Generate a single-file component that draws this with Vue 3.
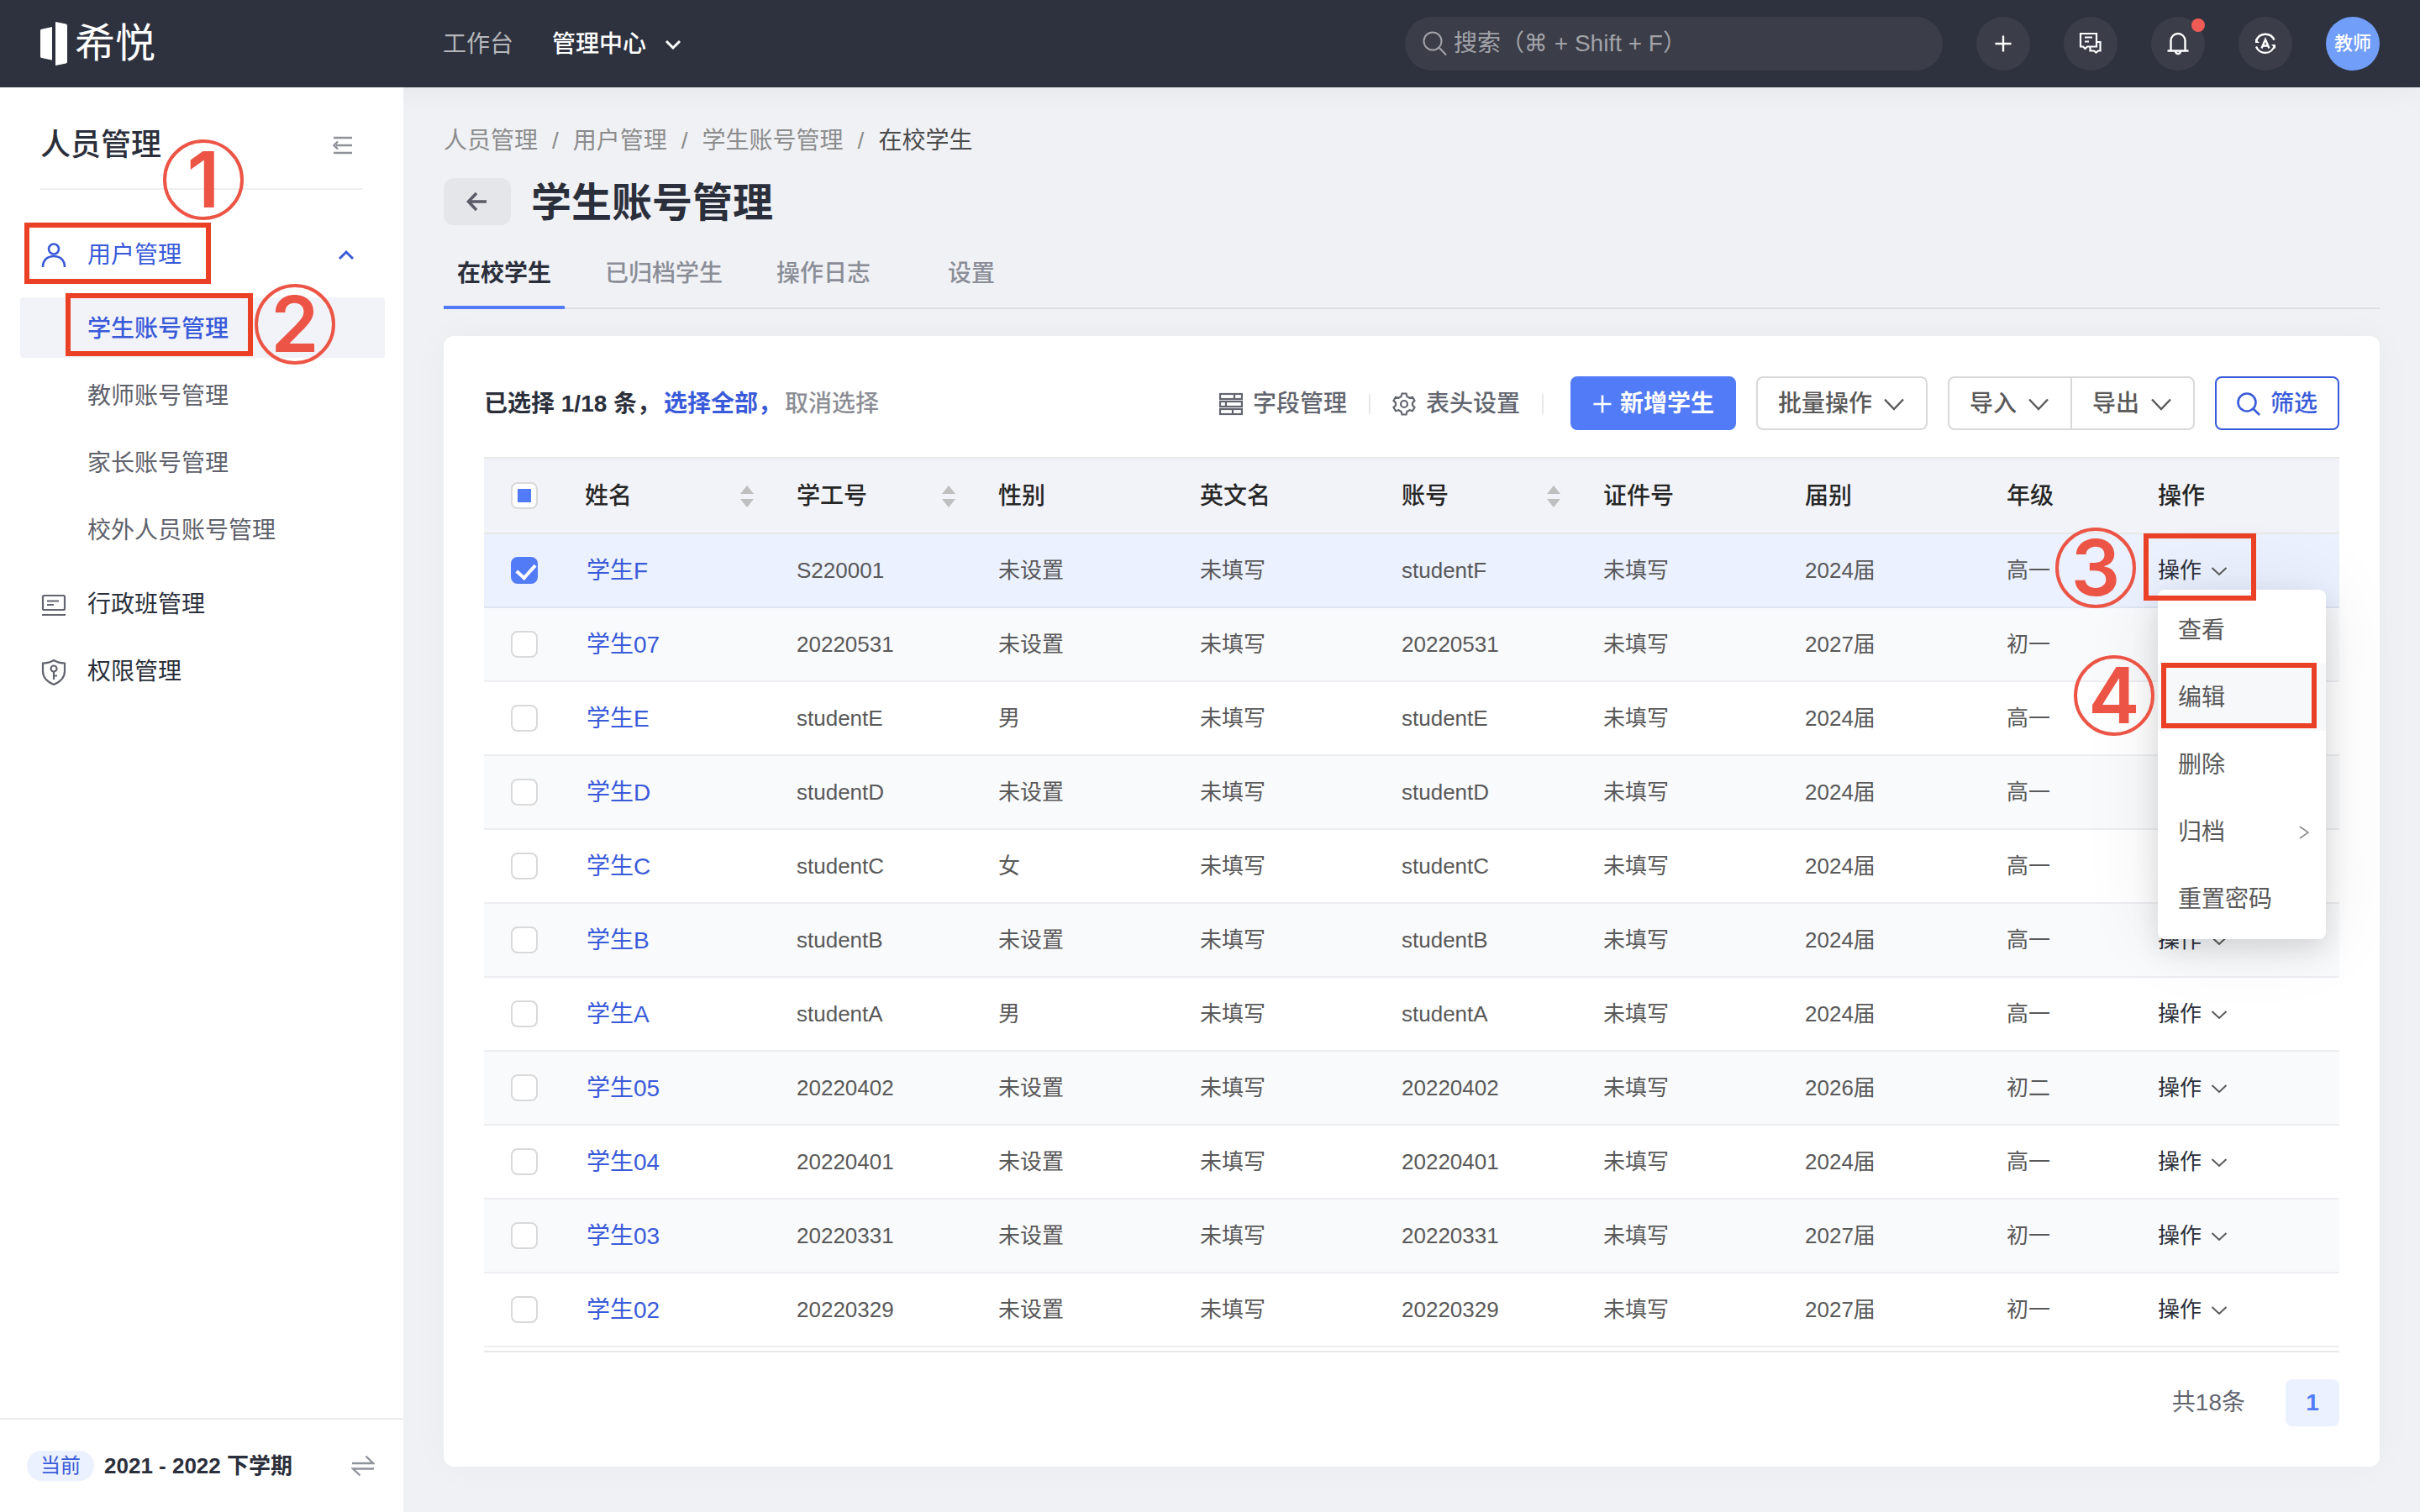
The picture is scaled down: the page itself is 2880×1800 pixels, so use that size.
<script setup>
import { ref } from 'vue'

const crumbs = ['人员管理', '用户管理', '学生账号管理']
const tabs = ['在校学生', '已归档学生', '操作日志', '设置']
const activeTab = ref('在校学生')
const subMenu = ['学生账号管理', '教师账号管理', '家长账号管理', '校外人员账号管理']

const columns = [
  { title: '姓名', width: 252, sortable: true },
  { title: '学工号', width: 240, sortable: true },
  { title: '性别', width: 240 },
  { title: '英文名', width: 240 },
  { title: '账号', width: 240, sortable: true },
  { title: '证件号', width: 240 },
  { title: '届别', width: 240 },
  { title: '年级', width: 180 },
  { title: '操作', width: 240 },
]

const student = (name, code, gender, cohort, grade, checked = false, account = code) => ({
  name, code, gender, cohort, grade, checked, account,
})

const rows = ref([
  student('学生F', 'S220001', '未设置', '2024届', '高一', true, 'studentF'),
  student('学生07', '20220531', '未设置', '2027届', '初一'),
  student('学生E', 'studentE', '男', '2024届', '高一'),
  student('学生D', 'studentD', '未设置', '2024届', '高一'),
  student('学生C', 'studentC', '女', '2024届', '高一'),
  student('学生B', 'studentB', '未设置', '2024届', '高一'),
  student('学生A', 'studentA', '男', '2024届', '高一'),
  student('学生05', '20220402', '未设置', '2026届', '初二'),
  student('学生04', '20220401', '未设置', '2024届', '高一'),
  student('学生03', '20220331', '未设置', '2027届', '初一'),
  student('学生02', '20220329', '未设置', '2027届', '初一'),
])

const rowMenu = ['查看', '编辑', '删除', '归档', '重置密码']
</script>

<template>
  <div class="page">
    <header class="topbar">
      <a class="logo" href="#" aria-label="希悦">
        <svg width="32" height="52" viewBox="0 0 32 52" fill="#fff">
          <path d="M0 10.500Q0 9 1.500 8.700L14 6V45.500L1.500 43Q0 42.700 0 41.500Z" />
          <path d="M18 0L30.500 2.500Q32 2.800 32 4.500V47.500Q32 49.200 30.500 49.500L18 52Z" />
        </svg>
        <span>希悦</span>
      </a>
      <nav class="topnav">
        <a href="#">工作台</a>
        <a href="#" class="current">管理中心
          <svg width="24" height="24" viewBox="0 0 24 24" class="line" stroke-width="3"><path d="M4 8l8 8 8-8" /></svg>
        </a>
      </nav>
      <div class="topright">
        <label class="search">
          <svg width="32" height="32" viewBox="0 0 32 32" class="line" stroke-width="2"><circle cx="13" cy="13" r="10.500" /><path d="M20.500 20.500L29 29.500" /></svg>
          <input type="text" aria-label="搜索" placeholder="搜索（⌘ + Shift + F）" />
        </label>
        <button class="round" aria-label="新建">
          <svg width="32" height="32" viewBox="0 0 32 32" class="line" stroke-width="2.400"><path d="M16 6.500v19M6.500 16h19" /></svg>
        </button>
        <button class="round" aria-label="会话">
          <svg width="32" height="32" viewBox="0 0 32 32" class="line" stroke-width="2.200"><path d="M4 4h19v15.500H12l-2.500 2.500L7 19.500H4z" /><path d="M9 8.500h9M9 13.500h5" /><path d="M23 14h4.500v10.500H25l-2.500 2-2.500-2h-4.500V20" /></svg>
        </button>
        <button class="round" aria-label="通知">
          <svg width="32" height="32" viewBox="0 0 32 32" class="line" stroke-width="2.400"><path d="M7.500 24V12.500a8.500 8.500 0 0 1 17 0V24M3.500 24.500h25M13 25a3 3 0 0 0 6 0" /></svg>
          <i class="dot"></i>
        </button>
        <button class="round" aria-label="语言">
          <svg width="32" height="32" viewBox="0 0 32 32" class="line" stroke-width="2.400"><path d="M5 13A11.500 11.500 0 0 1 26.500 11.500M5 19.500A11.500 11.500 0 0 0 26.800 18.500" /><path d="M4 10v5h5zM28 22v-5h-5z" fill="currentColor" stroke="none" /><path d="M11.500 21.500L16 11l4.500 10.500M13 18.500h6" /></svg>
        </button>
        <button class="round avatar">教师</button>
      </div>
    </header>

    <div class="body">
      <aside class="sidebar">
        <div class="side-head">
          <h2>人员管理</h2>
          <svg width="24" height="24" viewBox="0 0 24 24" class="line" stroke-width="2.400"><path d="M1 3h22M4 12h19M1 21h22M6 7.500L1.500 12 6 16.500" /></svg>
          <span class="step step-1">1</span>
        </div>
        <nav class="menu">
          <a href="#" class="item open">
            <svg width="32" height="32" viewBox="0 0 32 32" class="line" stroke-width="2.600"><circle cx="16" cy="8.500" r="6" /><path d="M3 30c0-8.500 5.500-13 13-13s13 4.500 13 13" /></svg>
            用户管理
            <svg class="caret line" width="24" height="24" viewBox="0 0 24 24" stroke-width="3"><path d="M4 16l8-8 8 8" /></svg>
            <span class="frame frame-1"></span>
          </a>
          <div class="submenu">
            <a v-for="(s, i) in subMenu" :key="s" href="#" class="item sub" :class="{ active: i === 0 }">
              {{ s }}
              <template v-if="i === 0">
                <span class="frame frame-2"></span>
                <span class="step step-2">2</span>
              </template>
            </a>
          </div>
          <a href="#" class="item">
            <svg width="32" height="32" viewBox="0 0 32 32" class="line" stroke-width="2.200"><rect x="3" y="5" width="26" height="17" rx="1.500" /><path d="M2 28h28M8 11.500h14M8 16h8" /></svg>
            行政班管理
          </a>
          <a href="#" class="item">
            <svg width="32" height="32" viewBox="0 0 32 32" class="line" stroke-width="2.200"><path d="M16 2c4 2.500 8 3.500 13 3.500V15c0 7.500-5 12.500-13 16C8 27.500 3 22.500 3 15V5.500C8 5.500 12 4.500 16 2z" /><circle cx="16" cy="12" r="3.500" /><path d="M16 15.500V25M16 20.500h4" /></svg>
            权限管理
          </a>
        </nav>
        <div class="term">
          <span class="pill">当前</span>
          <strong>2021 - 2022 下学期</strong>
          <svg width="28" height="28" viewBox="0 0 28 28" class="line" stroke-width="2.400"><path d="M1 11h25L17.500 2.500M27 17.500H2l8.500 8" /></svg>
        </div>
      </aside>

      <main class="main">
        <nav class="crumbs">
          <template v-for="c in crumbs" :key="c"><a href="#">{{ c }}</a><i>/</i></template>
          <span>在校学生</span>
        </nav>
        <div class="title">
          <button class="back" aria-label="返回">
            <svg width="28" height="28" viewBox="0 0 28 28" class="line" stroke-width="3.600"><path d="M25 14H4M13 4L3.500 14 13 24" /></svg>
          </button>
          <h1>学生账号管理</h1>
        </div>
        <div class="tabs" role="tablist">
          <button v-for="t in tabs" :key="t" role="tab" :class="{ on: t === activeTab }" @click="activeTab = t">{{ t }}</button>
        </div>

        <section class="card">
          <div class="toolbar">
            <p class="picked"><span>已选择 1/18 条，</span><a href="#">选择全部，</a><a href="#" class="muted">取消选择</a></p>
            <button class="plain">
              <svg width="28" height="28" viewBox="0 0 28 28" class="line" stroke-width="2.200"><rect x="1" y="2" width="26" height="6" /><rect x="1" y="11" width="26" height="6" /><rect x="1" y="20" width="26" height="6" /><path d="M18 2v6M8 11v6M16 20v6" /></svg>
              字段管理
            </button>
            <button class="plain">
              <svg width="28" height="28" viewBox="0 0 28 28" class="line" stroke-width="2.200"><circle cx="14" cy="14" r="4" /><path d="M11.500 1.500h5l1 3.500 3 1.700 3.500-1 2.500 4.300-2.500 2.500v3l2.500 2.500-2.500 4.300-3.500-1-3 1.700-1 3.500h-5l-1-3.500-3-1.700-3.500 1L1.500 18 4 15.500v-3L1.500 10 4 5.700l3.500 1 3-1.700z" /></svg>
              表头设置
            </button>
            <div class="buttons">
              <button class="btn primary">
                <svg width="24" height="24" viewBox="0 0 24 24" class="line" stroke-width="2.600"><path d="M12 1.500v21M1.500 12h21" /></svg>
                新增学生
              </button>
              <button class="btn">批量操作
                <svg width="28" height="28" viewBox="0 0 28 28" class="line" stroke-width="2.400"><path d="M3 8.500L14 20 25 8.500" /></svg>
              </button>
              <div class="group">
                <button class="btn">导入
                  <svg width="28" height="28" viewBox="0 0 28 28" class="line" stroke-width="2.400"><path d="M3 8.500L14 20 25 8.500" /></svg>
                </button>
                <button class="btn">导出
                  <svg width="28" height="28" viewBox="0 0 28 28" class="line" stroke-width="2.400"><path d="M3 8.500L14 20 25 8.500" /></svg>
                </button>
              </div>
              <button class="btn filter">
                <svg width="28" height="28" viewBox="0 0 28 28" class="line" stroke-width="2.600"><circle cx="12" cy="12" r="10.500" /><path d="M19.500 19.500L27 27" /></svg>
                筛选
              </button>
            </div>
          </div>

          <table class="grid">
            <colgroup>
              <col style="width: 96px" />
              <col v-for="c in columns" :key="c.title" :style="{ width: c.width + 'px' }" />
            </colgroup>
            <thead>
              <tr>
                <th class="tick"><input type="checkbox" aria-label="全选" :indeterminate.prop="true" /></th>
                <th v-for="c in columns" :key="c.title">
                  <div class="th">
                    {{ c.title }}
                    <svg v-if="c.sortable" width="16" height="26" viewBox="0 0 16 26" fill="#bfbfbf"><path d="M8 0l8 10H0zM8 26l8-10H0z" /></svg>
                  </div>
                </th>
              </tr>
            </thead>
            <tbody>
              <tr v-for="(r, i) in rows" :key="r.name" :class="{ chosen: r.checked }">
                <td class="tick"><input v-model="r.checked" type="checkbox" :aria-label="r.name" /></td>
                <td class="name"><a href="#">{{ r.name }}</a></td>
                <td>{{ r.code }}</td>
                <td>{{ r.gender }}</td>
                <td>未填写</td>
                <td>{{ r.account }}</td>
                <td>未填写</td>
                <td>{{ r.cohort }}</td>
                <td>{{ r.grade }}</td>
                <td>
                  <div class="action">
                    <button>操作
                      <svg width="20" height="20" viewBox="0 0 20 20" class="line" stroke-width="2"><path d="M1.500 7l8.500 8 8.500-8" /></svg>
                    </button>
                    <template v-if="i === 0">
                      <div class="dropdown">
                        <a v-for="m in rowMenu" :key="m" href="#" :class="{ hover: m === '编辑' }">
                          {{ m }}
                          <svg v-if="m === '归档'" class="more line" width="12" height="18" viewBox="0 0 12 18" stroke-width="1.600"><path d="M1 2l10 7-10 7" /></svg>
                          <template v-if="m === '编辑'">
                            <span class="frame frame-4"></span>
                            <span class="step step-4">4</span>
                          </template>
                        </a>
                      </div>
                      <span class="frame frame-3"></span>
                      <span class="step step-3">3</span>
                    </template>
                  </div>
                </td>
              </tr>
            </tbody>
          </table>

          <footer class="pager">
            <span>共18条</span>
            <button>1</button>
          </footer>
        </section>
      </main>
    </div>
  </div>
</template>

<style>
body {
  background: #f0f1f5;
}
</style>

<style scoped>
* {
  box-sizing: border-box;
}
.page {
  min-height: 100vh;
  display: flex;
  flex-direction: column;
  background: #f0f1f5;
  color: #2b2f3b;
  font-family: "Liberation Sans", "Noto Sans CJK SC", sans-serif;
  font-size: 28px;
  line-height: 40px;
}
a {
  color: inherit;
  text-decoration: none;
}
button {
  margin: 0;
  padding: 0;
  border: 0;
  background: none;
  color: inherit;
  font: inherit;
  cursor: pointer;
}
h1, h2, p {
  margin: 0;
}
i {
  font-style: normal;
}
svg {
  flex: none;
  display: block;
}
.line {
  fill: none;
  stroke: currentColor;
}

/* Top bar */
.topbar {
  position: relative;
  z-index: 1;
  display: flex;
  align-items: center;
  height: 104px;
  padding-right: 48px;
  background: #2e323e;
  color: #fff;
  box-shadow: 0 0 40px rgba(0, 0, 0, 0.06);
}
.logo {
  display: flex;
  align-items: center;
  gap: 9px;
  width: 527px;
  padding-left: 48px;
  font-size: 48px;
  font-weight: 400;
  line-height: 52px;
}
.topnav {
  display: flex;
  gap: 46px;
  padding-top: 2px;
}
.topnav a {
  display: flex;
  align-items: center;
  gap: 20px;
  color: #b6b7bb;
}
.topnav .current {
  color: #fff;
  font-weight: 500;
}
.topright {
  display: flex;
  gap: 40px;
  margin-left: auto;
}
.search {
  display: flex;
  align-items: center;
  gap: 6px;
  width: 640px;
  height: 64px;
  padding: 0 20px;
  border-radius: 32px;
  background: #3b3d49;
  color: #a2a3a8;
}
.search input {
  flex: 1;
  min-width: 0;
  padding: 0;
  border: 0;
  outline: 0;
  background: none;
  color: #fff;
  font: inherit;
  font-family: "Liberation Sans", "DejaVu Sans", "Noto Sans CJK SC", sans-serif;
}
.search input::placeholder {
  color: #a2a3a8;
  opacity: 1;
}
.round {
  position: relative;
  display: flex;
  align-items: center;
  justify-content: center;
  width: 64px;
  height: 64px;
  border-radius: 50%;
  background: #3b3d49;
}
.avatar {
  background: #719ef9;
  font-size: 22px;
  font-weight: 500;
}
.dot {
  position: absolute;
  top: 2px;
  right: 0;
  width: 16px;
  height: 16px;
  border-radius: 50%;
  background: #f05b56;
}

/* Sidebar */
.body {
  display: flex;
  flex: 1;
}
.sidebar {
  position: relative;
  z-index: 2;
  display: flex;
  flex-direction: column;
  width: 480px;
  flex: none;
  background: #fff;
}
.side-head {
  position: relative;
  display: flex;
  align-items: center;
  justify-content: space-between;
  height: 122px;
  margin: 0 48px;
  padding: 18px 12px 0 0;
  border-bottom: 2px solid #f0f0f0;
  color: #8f9199;
}
.side-head h2 {
  color: #2b2f3b;
  font-size: 36px;
  font-weight: 500;
}
.menu {
  display: flex;
  flex-direction: column;
  gap: 8px;
  flex: 1;
  padding: 40px 22px 0 24px;
}
.item {
  position: relative;
  display: flex;
  align-items: center;
  gap: 24px;
  height: 72px;
  padding: 3px 34px 0 24px;
  border-radius: 4px;
}
.item > svg {
  color: #62656f;
}
.item.open,
.item.open > svg {
  color: #3a5bd9;
}
.item .caret {
  margin-left: auto;
}
.submenu {
  display: flex;
  flex-direction: column;
  gap: 8px;
  padding: 8px 0;
}
.item.sub {
  padding-left: 80px;
  color: #5f626c;
}
.item.active {
  background: #f2f3f8;
  color: #3a5bd9;
  font-weight: 500;
}
.term {
  display: flex;
  align-items: center;
  gap: 12px;
  height: 112px;
  padding: 0 34px 0 32px;
  border-top: 2px solid #ebebeb;
  font-size: 26px;
}
.term strong {
  font-weight: 600;
}
.term svg {
  margin-left: auto;
  color: #8f939c;
}
.pill {
  width: 80px;
  border-radius: 18px;
  background: #ebf1fe;
  color: #3a5bd9;
  font-size: 24px;
  line-height: 36px;
  text-align: center;
}

/* Main column */
.main {
  flex: 1;
  min-width: 0;
  padding: 44px 48px 54px;
}
.crumbs {
  display: flex;
  gap: 17px;
  color: #8c8c8c;
}
.crumbs span {
  color: #4a4a4a;
}
.title {
  display: flex;
  align-items: center;
  gap: 24px;
  height: 56px;
  margin-top: 24px;
}
.title h1 {
  padding-top: 4px;
  font-size: 48px;
  font-weight: 700;
  line-height: 56px;
}
.back {
  display: flex;
  align-items: center;
  justify-content: center;
  width: 80px;
  height: 56px;
  border-radius: 12px;
  background: #e5e6ea;
  color: #5a5d68;
}
.tabs {
  display: flex;
  gap: 32px;
  height: 100px;
  margin-bottom: 32px;
  box-shadow: inset 0 -2px #dddfe4;
}
.tabs button {
  min-width: 144px;
  padding: 20px 16px 0;
  border-bottom: 4px solid transparent;
  color: #8a8d96;
  font-weight: 500;
}
.tabs .on {
  border-color: #527bf7;
  color: #2b2f3b;
  font-weight: 700;
}
.card {
  padding: 48px;
  border-radius: 12px;
  background: #fff;
  box-shadow: 0 0 48px rgba(0, 0, 0, 0.03);
}

/* Toolbar */
.toolbar {
  display: flex;
  align-items: center;
  margin-bottom: 32px;
  font-weight: 500;
}
.picked {
  display: flex;
  gap: 4px;
  margin-right: auto;
  padding-top: 2px;
  font-weight: 600;
}
.picked a {
  color: #3a5bd9;
}
.picked .muted {
  color: #8c8e95;
  font-weight: 500;
}
.plain {
  display: flex;
  align-items: center;
  gap: 12px;
  padding-top: 2px;
  padding-right: 26px;
  color: #62656f;
}
.plain::after {
  content: "";
  width: 2px;
  height: 24px;
  margin-left: 14px;
  background: #e8e8e8;
}
.plain + .plain {
  padding-right: 32px;
}
.buttons {
  display: flex;
  gap: 24px;
}
.btn {
  display: flex;
  align-items: center;
  gap: 12px;
  height: 64px;
  padding: 2px 24px 0;
  border: 2px solid #d9d9d9;
  border-radius: 8px;
  background: #fff;
  color: #595959;
}
.primary {
  gap: 9px;
  border-color: #527bf7;
  background: #527bf7;
  color: #fff;
  font-weight: 600;
}
.filter {
  border-color: #3a5bd9;
  color: #3a5bd9;
}
.group {
  display: flex;
}
.group .btn:first-child {
  border-radius: 8px 0 0 8px;
}
.group .btn:last-child {
  margin-left: -2px;
  border-radius: 0 8px 8px 0;
}

/* Table */
.grid {
  width: 100%;
  table-layout: fixed;
  border-collapse: separate;
  border-spacing: 0;
  border-bottom: 2px solid #e8e8e8;
  padding-bottom: 4px;
  color: #595959;
  font-size: 26px;
}
.grid th {
  height: 92px;
  padding: 2px 27px 0 24px;
  border-top: 2px solid #e8e8e8;
  border-bottom: 2px solid #e8e8e8;
  background: #f2f3f8;
  color: #262626;
  font-size: 28px;
  font-weight: 500;
}
.th {
  display: flex;
  align-items: center;
  justify-content: space-between;
}
.grid td {
  height: 88px;
  padding: 0 0 0 24px;
  border-bottom: 2px solid #edeef1;
}
.grid tbody tr:nth-child(even) {
  background: #f9fafc;
}
.grid tbody tr.chosen {
  background: #ebf1fe;
}
.grid .chosen td {
  border-color: #dfe5f1;
}
.grid .name {
  padding: 2px 0 0 26px;
  color: #3a5bd9;
  font-size: 28px;
}
.grid .tick {
  padding: 0 32px;
}
.tick input {
  display: block;
  position: relative;
  width: 32px;
  height: 32px;
  margin: 0;
  appearance: none;
  border: 2px solid #d9d9d9;
  border-radius: 8px;
  background: #fff;
}
.tick input:checked {
  border-color: #527bf7;
  background: #527bf7;
}
.tick input:checked::after {
  content: "";
  position: absolute;
  left: 9px;
  top: 2px;
  width: 10px;
  height: 18px;
  border: solid #fff;
  border-width: 0 4px 4px 0;
  transform: rotate(42deg);
}
.tick input:indeterminate::after {
  content: "";
  position: absolute;
  inset: 6px;
  background: #527bf7;
}
.action {
  position: relative;
}
.action button {
  display: flex;
  align-items: center;
  gap: 11px;
  color: #2b2f3b;
}
.action button svg {
  color: #595959;
}
.dropdown {
  position: absolute;
  z-index: 3;
  top: 43px;
  left: 0;
  width: 200px;
  padding: 8px 0;
  border-radius: 8px;
  background: #fff;
  box-shadow: 0 12px 32px rgba(0, 0, 0, 0.12), 0 0 96px rgba(0, 0, 0, 0.08);
}
.dropdown a {
  position: relative;
  display: flex;
  align-items: center;
  justify-content: space-between;
  height: 80px;
  padding: 2px 20px 0 24px;
  color: #595959;
  font-size: 28px;
}
.dropdown .hover {
  background: #f7f8fa;
}
.more {
  color: #8c8c8c;
}

/* Pagination */
.pager {
  display: flex;
  align-items: center;
  justify-content: flex-end;
  gap: 48px;
  margin-top: 32px;
  color: #62656f;
}
.pager button {
  width: 64px;
  height: 56px;
  border-radius: 8px;
  background: #ebf1fe;
  color: #527bf7;
  font-weight: 700;
}

/* Walkthrough marks laid over the interface */
.frame {
  position: absolute;
  z-index: 4;
  border: 6px solid #ea4025;
  pointer-events: none;
}
.step {
  position: absolute;
  z-index: 4;
  width: 96px;
  height: 96px;
  border: 4px solid #ec5546;
  border-radius: 50%;
  color: #ec5546;
  font-family: Inter, "Liberation Sans", sans-serif;
  font-size: 92px;
  font-weight: 600;
  line-height: 88px;
  text-align: center;
  pointer-events: none;
}
.frame-1 {
  top: -1px;
  left: 5px;
  width: 222px;
  height: 73px;
}
.frame-2 {
  top: -5px;
  left: 54px;
  width: 223px;
  height: 75px;
}
.frame-3 {
  top: -24px;
  left: -17px;
  width: 134px;
  height: 80px;
}
.frame-4 {
  top: -1px;
  left: 4px;
  width: 185px;
  height: 78px;
}
.step-1 {
  top: 62px;
  left: 146px;
}
.step-2 {
  top: -16px;
  left: 279px;
}
.step-3 {
  top: -31px;
  left: -122px;
}
.step-4 {
  top: -10px;
  left: -100px;
}
</style>
